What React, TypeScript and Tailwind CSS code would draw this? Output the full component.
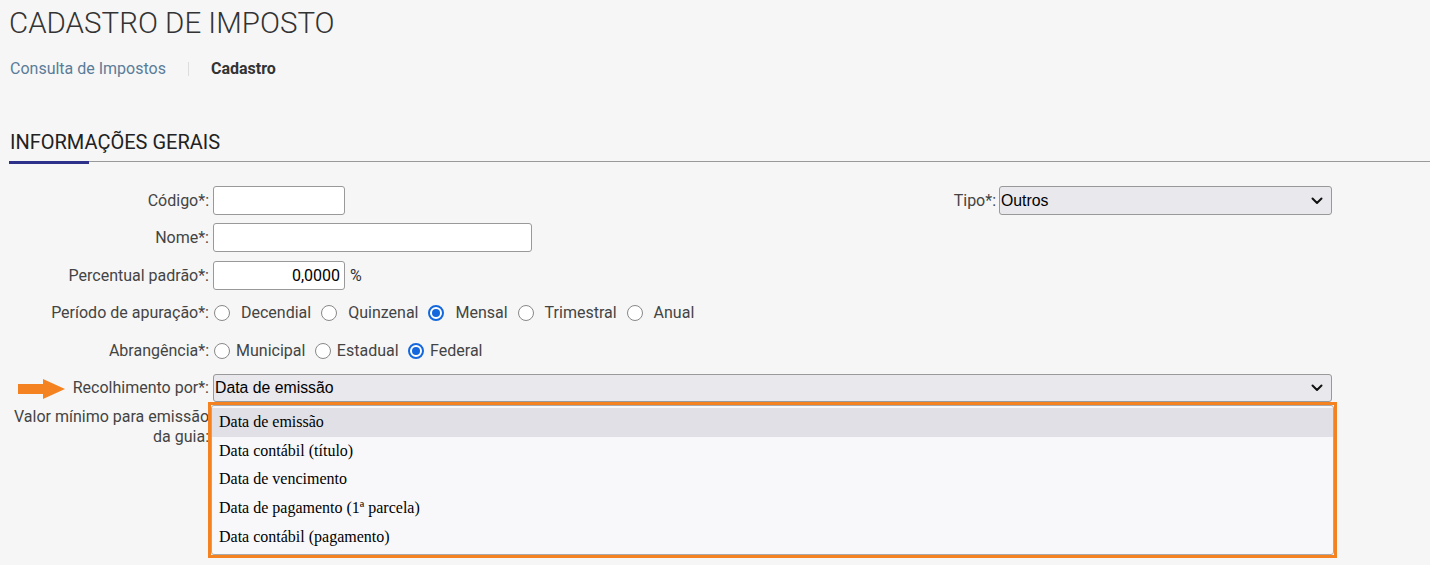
import React from 'react';

const Label: React.FC<{ children: React.ReactNode }> = ({ children }) => (
  <label className="block w-[210px] shrink-0 pr-[1px] text-right text-[16px] leading-[20px] text-[#444]">{children}</label>
);

const Radio: React.FC<{ label: string; checked?: boolean; gap: string }> = ({ label, checked, gap }) => (
  <span className={`flex items-center ${gap}`}>
    {checked ? (
      <span className="flex h-[16px] w-[16px] items-center justify-center rounded-full border-[2px] border-[#1467dc] bg-white">
        <span className="h-[8px] w-[8px] rounded-full bg-[#1467dc]" />
      </span>
    ) : (
      <span className="h-[16px] w-[16px] rounded-full border-[1.5px] border-[#888] bg-white" />
    )}
    <span className="text-[16px] text-[#444]">{label}</span>
  </span>
);

const Chevron: React.FC = () => (
  <svg width="12" height="8" viewBox="0 0 12 8" fill="none" stroke="#111" strokeWidth="2" strokeLinecap="round" strokeLinejoin="round">
    <path d="M1.5 1.5 6 6l4.5-4.5" />
  </svg>
);

const options = [
  'Data de emissão',
  'Data contábil (título)',
  'Data de vencimento',
  'Data de pagamento (1ª parcela)',
  'Data contábil (pagamento)',
];

export default function App() {
  return (
    <div className="min-h-[565px] overflow-hidden bg-[#f6f6f6] pt-[6px] font-['Roboto',sans-serif]">
      {/* Title */}
      <h1 className="pl-[9px] text-[29.5px] font-light leading-[34px] text-[#333]">CADASTRO DE IMPOSTO</h1>

      {/* Breadcrumb */}
      <div className="mt-[19px] flex items-center pl-[10px] text-[16px] leading-[20px]">
        <span className="text-[#5b7c99]">Consulta de Impostos</span>
        <span className="mx-[22px] h-[14px] w-[1px] bg-[#ddd]" />
        <span className="font-bold text-[#333]">Cadastro</span>
      </div>

      {/* Section heading */}
      <div className="ml-[9px] mt-[51px]">
        <h2 className="pl-[1px] text-[20px] leading-[24px] text-[#222]">INFORMAÇÕES GERAIS</h2>
        <div className="relative mt-[7px] h-[1px] bg-[#999]">
          <div className="absolute left-0 top-0 h-[3px] w-[80px] bg-[#2d3189]" />
        </div>
      </div>

      {/* Form */}
      <div className="mt-[24px] w-[1332px]">
        <div className="flex h-[29px] items-center">
          <Label>Código*:</Label>
          <input className="ml-[3px] h-[29px] w-[132px] rounded-[3px] border border-[#999] bg-white" />
          <div className="flex-1" />
          <span className="text-[16px] text-[#444]">Tipo*:</span>
          <div className="ml-[3px] flex h-[29px] w-[333px] items-center justify-between rounded-[3px] border border-[#999] bg-[#e9e8ed] pl-[1px] pr-[8px] font-['Liberation_Sans',sans-serif] text-[15.8px] text-black">
            <span>Outros</span>
            <Chevron />
          </div>
        </div>

        <div className="mt-[8px] flex h-[29px] items-center">
          <Label>Nome*:</Label>
          <input className="ml-[3px] h-[29px] w-[319px] rounded-[3px] border border-[#999] bg-white" />
        </div>

        <div className="mt-[9px] flex h-[29px] items-center">
          <Label>Percentual padrão*:</Label>
          <div className="ml-[3px] flex h-[29px] w-[132px] items-center justify-end rounded-[3px] border border-[#999] bg-white pr-[4px] text-[16px] text-black">
            0,0000
          </div>
          <span className="ml-[5px] text-[16px] text-[#333]">%</span>
        </div>

        <div className="mt-[9px] flex h-[28px] items-center">
          <Label>Período de apuração*:</Label>
          <div className="ml-[4px] flex items-center gap-[10px]">
            <Radio label="Decendial" gap="gap-[11px]" />
            <Radio label="Quinzenal" gap="gap-[11px]" />
            <Radio label="Mensal" checked gap="gap-[11px]" />
            <Radio label="Trimestral" gap="gap-[11px]" />
            <Radio label="Anual" gap="gap-[11px]" />
          </div>
        </div>

        <div className="mt-[10px] flex h-[28px] items-center">
          <Label>Abrangência*:</Label>
          <div className="ml-[4px] flex items-center gap-[9.5px]">
            <Radio label="Municipal" gap="gap-[6px]" />
            <Radio label="Estadual" gap="gap-[6px]" />
            <Radio label="Federal" checked gap="gap-[6px]" />
          </div>
        </div>

        <div className="relative mt-[9px]">
          <div className="flex h-[28px] items-center">
            <div className="relative w-[210px] shrink-0">
              <svg className="absolute left-[18px] top-[1px]" width="47" height="20" viewBox="0 0 47 20">
                <path d="M0 5h25V0l22 10-22 10v-5H0z" fill="#f58220" />
              </svg>
              <Label>Recolhimento por*:</Label>
            </div>
            <div className="ml-[3px] flex h-[28px] flex-1 items-center justify-between rounded-[3px] border border-[#999] bg-[#e9e8ed] pl-[1px] pr-[8px] font-['Liberation_Sans',sans-serif] text-[15.8px] text-black">
              <span>Data de emissão</span>
              <Chevron />
            </div>
          </div>

          <div className="mt-[5px] flex">
            <Label>Valor mínimo para emissão da guia:</Label>
          </div>

          {/* Open dropdown */}
          <div className="absolute left-[208px] top-[28px] w-[1129px] border-[3px] border-[#f58220] bg-[#f8f8fa]">
            <div className="rounded-[3px] border border-[#aaa] bg-[#f8f8fa] pb-[3px] pt-[2px] font-['Liberation_Serif',serif] text-[16px] text-black">
              {options.map((o, i) => (
                <div
                  key={o}
                  className={`flex h-[28.6px] items-center pl-[7px] ${i === 0 ? 'bg-[#e1e0e6]' : ''}`}
                >
                  {o}
                </div>
              ))}
            </div>
          </div>
        </div>
      </div>
    </div>
  );
}
